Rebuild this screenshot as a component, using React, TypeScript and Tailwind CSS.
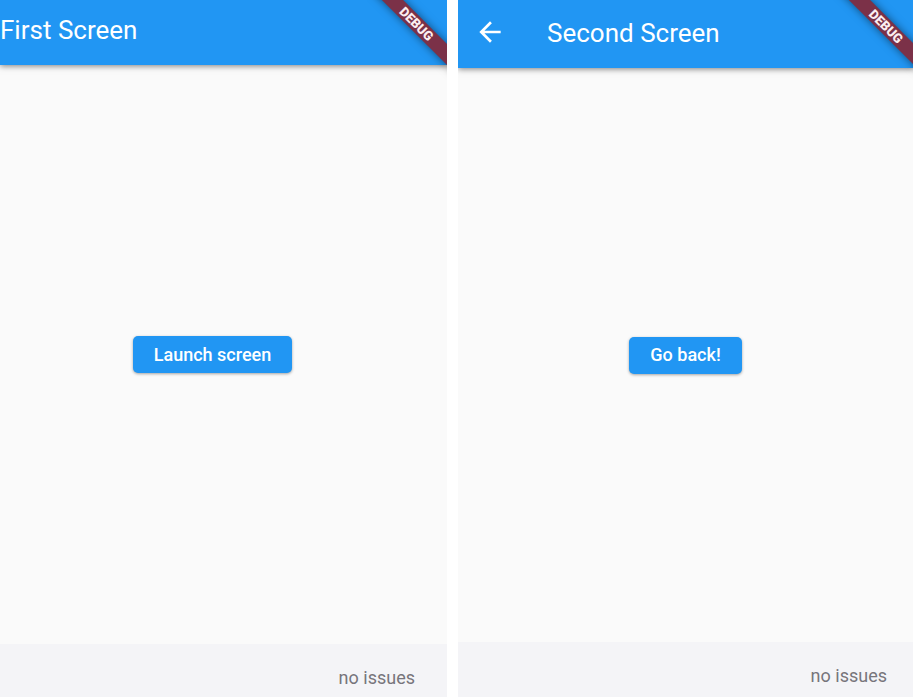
import clsx from "clsx";

function DebugRibbon({ className }: { className?: string }) {
  return (
    <div className="pointer-events-none absolute top-0 right-0 h-20 w-20 overflow-hidden">
      <div
        className={clsx(
          "absolute -right-[33px] flex h-[15px] w-30 rotate-45 items-center justify-center bg-[#7b3148] text-[13px] leading-4 font-black text-[#fbeef1] shadow-[0_0_8px_rgba(0,0,0,0.5)]",
          className,
        )}
      >
        DEBUG
      </div>
    </div>
  );
}

function RaisedButton({ children }: { children: string }) {
  return (
    <button
      type="button"
      className="h-[37px] rounded-[5px] bg-[#2196f3] px-[21px] text-[18px] leading-6 font-medium text-white shadow-[0_1px_3px_rgba(0,0,0,0.35)]"
    >
      {children}
    </button>
  );
}

function StatusBar({ className }: { className: string }) {
  return (
    <footer className={clsx("flex items-start justify-end bg-[#f4f4f7] text-[18px] leading-6 text-[#77757b]", className)}>
      no issues
    </footer>
  );
}

const barStyle =
  "z-10 flex items-center bg-[#2196f3] text-[26px] leading-8 text-white shadow-[0_1px_6px_rgba(0,0,0,0.5)]";

export default function App() {
  return (
    <div className="grid min-h-screen grid-cols-[447fr_455fr] gap-[11px] bg-white font-[Roboto,sans-serif]">
      <section className="relative flex flex-col overflow-hidden bg-[#fafafa]">
        <header className={clsx(barStyle, "h-[65px] pb-1.5")}>
          <h1>First Screen</h1>
        </header>
        <main className="flex flex-1 items-center justify-center pr-[22px]">
          <RaisedButton>Launch screen</RaisedButton>
        </main>
        <StatusBar className="h-[53px] pt-[22px] pr-8" />
        <div className="absolute top-0 right-0 z-20">
          <DebugRibbon className="top-5 pr-2.5" />
        </div>
      </section>

      <section className="relative flex flex-col overflow-hidden bg-[#fafafa]">
        <header className={clsx(barStyle, "h-[68px] pb-0.5 pl-4")}>
          <button type="button" aria-label="Back" className="mr-[41px] flex h-8 w-8 items-center justify-center pb-0.5">
            <svg viewBox="0 0 24 24" className="h-8 w-8 shrink-0" fill="currentColor" aria-hidden="true">
              <path d="M20 11H7.83l5.59-5.59L12 4l-8 8 8 8 1.41-1.41L7.83 13H20v-2z" />
            </svg>
          </button>
          <h1>Second Screen</h1>
        </header>
        <main className="flex flex-1 items-center justify-center">
          <RaisedButton>Go back!</RaisedButton>
        </main>
        <StatusBar className="h-[55px] pt-[22px] pr-[26px]" />
        <div className="absolute top-0 right-0 z-20">
          <DebugRibbon className="top-[19px]" />
        </div>
      </section>
    </div>
  );
}
